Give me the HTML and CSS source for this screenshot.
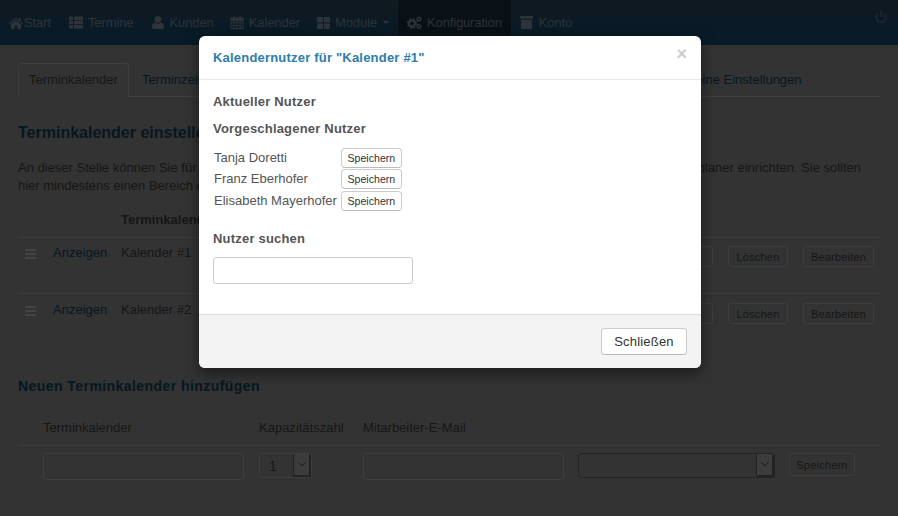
FILE: index.html
```html
<!DOCTYPE html>
<html lang="de">
<head>
<meta charset="utf-8">
<title>Konfiguration</title>
<link rel="stylesheet" href="styles.css">
</head>
<body>
<nav class="topbar">
  <a class="nav-item"><svg class="ico ico-home" viewBox="0 0 14 12"><path d="M7 0.5 L0 6.6 L0.8 7.5 L7 2.2 L13.2 7.5 L14 6.6 L11.5 4.4 V1 H9.8 V2.9 Z M7 3.4 L2 7.6 V12 H5.6 V8.4 H8.4 V12 H12 V7.6 Z"/></svg>Start</a>
  <a class="nav-item"><svg class="ico ico-w" viewBox="0 0 14 12"><path d="M0 0H4V3.4H0ZM5 0H14V3.4H5ZM0 4.3H4V7.7H0ZM5 4.3H14V7.7H5ZM0 8.6H4V12H0ZM5 8.6H14V12H5Z"/></svg>Termine</a>
  <a class="nav-item"><svg class="ico ico-u" viewBox="1 0 12 13"><path d="M7 0A3.3 3.3 0 0 1 7 6.8A3.3 3.3 0 0 1 7 0ZM4 6.6C5.6 8 8.4 8 10 6.6C12.2 7 13 8.6 13 11.2C13 12.4 12.2 13 11 13H3C1.8 13 1 12.4 1 11.2C1 8.6 1.8 7 4 6.6Z"/></svg>Kunden</a>
  <a class="nav-item nav-tight"><svg class="ico ico-w ico-cal" viewBox="0 0 14 14"><path fill-rule="evenodd" d="M3 0H4.5V1.5H9.5V0H11V1.5H14V14H0V1.5H3ZM1 5V6.8H3V5ZM4 5V6.8H6.5V5ZM7.5 5V6.8H10V5ZM11 5V6.8H13V5ZM1 7.8V9.6H3V7.8ZM4 7.8V9.6H6.5V7.8ZM7.5 7.8V9.6H10V7.8ZM11 7.8V9.6H13V7.8ZM1 10.6V13H3V10.6ZM4 10.6V13H6.5V10.6ZM7.5 10.6V13H10V10.6ZM11 10.6V13H13V10.6Z"/></svg>Kalender</a>
  <a class="nav-item nav-tight-s"><svg class="ico ico-m" viewBox="0 0 13 12"><path d="M0 0H6V5.5H0ZM7 0H13V5.5H7ZM0 6.5H6V12H0ZM7 6.5H13V12H7Z"/></svg>Module<span class="caret"></span></a>
  <a class="nav-item active"><svg class="ico ico-g" viewBox="0 0 15 13"><circle class="gear-ring" cx="5" cy="7.5" r="3"/><circle class="gear-teeth" cx="5" cy="7.5" r="4.6"/><circle class="gear-ring thin" cx="12" cy="3" r="1.7"/><circle class="gear-ring thin" cx="12" cy="10.4" r="1.7"/></svg>Konfiguration</a>
  <a class="nav-item"><svg class="ico ico-k" viewBox="0 0 13 13"><path d="M0 0H13V2.8H0ZM1 3.8H12V13H1Z"/></svg>Konto</a>
  <span class="nav-spacer"></span>
  <svg class="power" viewBox="0 0 12 13"><path d="M6 0.5V6" /><path d="M3.3 2.6A4.8 4.8 0 1 0 8.7 2.6"/></svg>
</nav>

<main class="page">
  <ul class="tabs">
    <li class="tab current">Terminkalender</li>
    <li class="tab">Terminzeiten</li>
    <li class="tab tab-last">Allgemeine Einstellungen</li>
  </ul>

  <h2 class="section-title">Terminkalender einstellen</h2>
  <p class="intro">An dieser Stelle können Sie für jeden Mitarbeiter oder Bereich einen einzelnen Terminkalender für Ihren Online-Terminplaner einrichten. Sie sollten hier mindestens einen Bereich einrichten, damit Kunden Termine buchen können.</p>

  <div class="cal-head">Terminkalender</div>
  <div class="cal-row">
    <span class="handle"><i></i><i></i><i></i></span>
    <a class="link">Anzeigen</a>
    <span class="cal-name">Kalender #1</span>
    <span class="cal-actions">
      <button class="btn-dark btn-user"><svg class="mini-user" viewBox="0 0 8 8"><path d="M4 0A1.8 1.8 0 0 1 4 3.8A1.8 1.8 0 0 1 4 0ZM0.5 8C0.5 5 2 4.2 4 4.2C6 4.2 7.5 5 7.5 8Z"/></svg></button>
      <button class="btn-dark btn-del">Löschen</button>
      <button class="btn-dark btn-edit">Bearbeiten</button>
    </span>
  </div>
  <div class="cal-row">
    <span class="handle"><i></i><i></i><i></i></span>
    <a class="link">Anzeigen</a>
    <span class="cal-name">Kalender #2</span>
    <span class="cal-actions">
      <button class="btn-dark btn-user"><svg class="mini-user" viewBox="0 0 8 8"><path d="M4 0A1.8 1.8 0 0 1 4 3.8A1.8 1.8 0 0 1 4 0ZM0.5 8C0.5 5 2 4.2 4 4.2C6 4.2 7.5 5 7.5 8Z"/></svg></button>
      <button class="btn-dark btn-del">Löschen</button>
      <button class="btn-dark btn-edit">Bearbeiten</button>
    </span>
  </div>

  <h2 class="section-title add-title">Neuen Terminkalender hinzufügen</h2>
  <div class="add-head">
    <span class="col-name">Terminkalender</span>
    <span class="col-cap">Kapazitätszahl</span>
    <span class="col-mail">Mitarbeiter-E-Mail</span>
  </div>
  <div class="add-row">
    <span class="field col-name"></span>
    <span class="select col-cap"><span class="select-val">1</span><span class="select-arrow"><svg viewBox="0 0 8 5"><path d="M0.5 0.5L4 4L7.5 0.5"/></svg></span></span>
    <span class="field col-mail"></span>
    <span class="select select-strong col-user"><span class="select-val"></span><span class="select-arrow"><svg viewBox="0 0 8 5"><path d="M0.5 0.5L4 4L7.5 0.5"/></svg></span></span>
    <button class="btn-dark btn-save">Speichern</button>
  </div>
</main>

<section class="modal" role="dialog">
  <header class="modal-head">
    <h4 class="modal-title">Kalendernutzer für "Kalender #1"</h4>
    <span class="close">×</span>
  </header>
  <div class="modal-body">
    <h5 class="sub sub-current">Aktueller Nutzer</h5>
    <h5 class="sub sub-proposed">Vorgeschlagener Nutzer</h5>
    <table class="users">
      <tr><td>Tanja Doretti</td><td><button class="btn-mini">Speichern</button></td></tr>
      <tr><td>Franz Eberhofer</td><td><button class="btn-mini">Speichern</button></td></tr>
      <tr><td>Elisabeth Mayerhofer</td><td><button class="btn-mini">Speichern</button></td></tr>
    </table>
    <h5 class="sub sub-search">Nutzer suchen</h5>
    <input class="search" type="text">
  </div>
  <footer class="modal-foot"><button class="btn-close">Schließen</button></footer>
</section>
</body>
</html>
```
FILE: styles.css
```css
* { box-sizing: border-box; }
html, body { margin: 0; height: 516px; overflow: hidden; }
body {
  background: #333333;
  color: #161616;
  font-family: "Liberation Sans", Arial, sans-serif;
  font-size: 13px;
  position: relative;
}
button { font-family: inherit; }

/* top bar */
.topbar {
  display: flex;
  align-items: stretch;
  height: 45px;
  background: linear-gradient(#0f1a21, #071b29);
}
.nav-item {
  display: flex;
  align-items: center;
  padding: 0 9px;
  color: #2d3338;
  font-size: 13px;
  letter-spacing: -.1px;
}
.nav-tight { margin-left: -2px; }
.nav-tight-s { margin-left: -1px; }
.nav-item.active { background: #091116; letter-spacing: -.15px; }
.ico { fill: #2d3338; flex: none; }
.ico-home { width: 14px; height: 12px; margin-right: 1px; }
.ico-w { width: 14px; height: 13px; margin-right: 5px; }
.ico-u { width: 12px; height: 13px; margin-right: 6px; }
.ico-m { width: 13px; height: 12px; margin-right: 5px; }
.ico-g { width: 15px; height: 13px; margin-right: 5px; }
.ico-k { width: 13px; height: 13px; margin-right: 6px; }
.gear-ring { fill: none; stroke: #2d3338; stroke-width: 2.4; }
.gear-ring.thin { stroke-width: 1.6; }
.gear-teeth { fill: none; stroke: #2d3338; stroke-width: 1.6; stroke-dasharray: 2 1.6; }
.caret {
  width: 0;
  height: 0;
  margin-left: 6px;
  border-left: 3px solid transparent;
  border-right: 3px solid transparent;
  border-top: 3px solid #2d3338;
}
.nav-spacer { flex: 1; }
.power {
  width: 12px;
  height: 13px;
  margin: 11px 11px 0 0;
  fill: none;
  stroke: #1a262e;
  stroke-width: 2;
}

/* page */
.page { padding: 18px 18px 0; width: 898px; }
.tabs {
  display: flex;
  list-style: none;
  margin: 0;
  padding: 0;
  height: 34px;
  border-bottom: 1px solid #3e3e3e;
}
.tab {
  padding: 0 10px;
  height: 34px;
  line-height: 32px;
  color: #061722;
  border: 1px solid transparent;
}
.tab.current {
  margin-right: 2px;
  color: #161616;
  background: #333333;
  border-color: #3e3e3e #3e3e3e #333333;
  border-radius: 4px 4px 0 0;
}
.tab-last { margin-left: 418px; }

.section-title {
  margin: 0;
  font-size: 16px;
  line-height: 18px;
  font-weight: bold;
  color: #061722;
}
.tabs + .section-title { margin-top: 27px; }
.intro { margin: 17px 0 0; line-height: 18px; width: 848px; color: #161616; }

.cal-head {
  margin-top: 8px;
  height: 35px;
  padding: 8px 0 0 103px;
  line-height: 18px;
  font-weight: bold;
  border-bottom: 1px solid #3e3e3e;
}
.cal-row {
  display: flex;
  height: 56px;
  padding-top: 6px;
  border-bottom: 1px solid #3e3e3e;
  line-height: 18px;
}
.cal-row + .cal-row { padding-top: 7px; border-bottom: 0; }
.handle {
  display: flex;
  flex-direction: column;
  gap: 2px;
  width: 11px;
  margin: 5px 0 0 7px;
}
.handle i { display: block; height: 2px; background: #444444; }
.link { margin-left: 17px; width: 68px; color: #061722; }
.cal-name { flex: 1; }
.cal-actions { display: flex; margin: 2px 0 0 0; }
.btn-dark {
  height: 21px;
  padding: 0;
  font-size: 11px;
  letter-spacing: .2px;
  color: #161616;
  background: #333333;
  border: 1px solid #3d3d3d;
  border-radius: 3px;
}
.btn-user { width: 40px; padding-left: 19px; }
.mini-user { display: block; width: 8px; height: 8px; fill: #161616; }
.btn-del { width: 60px; margin-left: 15px; }
.btn-edit { width: 71px; margin: 0 6px 0 15px; }

.add-title { margin-top: 27px; font-size: 14px; letter-spacing: .44px; }
.add-head {
  display: flex;
  height: 36px;
  margin-top: 15px;
  padding: 9px 0 0 25px;
  line-height: 18px;
  border-bottom: 1px solid #3e3e3e;
}
.add-row { display: flex; padding: 7px 0 0 25px; }
.col-name { width: 201px; margin-right: 15px; }
.col-cap { width: 53px; margin-right: 51px; flex: none; white-space: nowrap; }
.col-mail { width: 201px; margin-right: 14px; }
.col-user { width: 197px; margin-right: 14px; }
.field {
  height: 27px;
  border: 1px solid #3e3e3e;
  border-radius: 3px;
}
.select {
  display: flex;
  height: 25px;
  border: 1px solid #3e3e3e;
  border-radius: 3px;
}
.select-strong { border-color: #242424; }
.select-val { flex: 1; padding: 3px 0 0 9px; line-height: 18px; font-size: 14px; }
.select-arrow {
  display: flex;
  align-items: center;
  justify-content: center;
  width: 18px;
  background: #3c3c3c;
  border: 1px solid #222222;
  border-width: 0 2px 2px 1px;
  border-radius: 0 2px 2px 0;
}
.select-arrow svg { width: 8px; height: 5px; fill: none; stroke: #161616; stroke-width: 1; }
.btn-save { width: 66px; height: 23px; }

/* modal */
.modal {
  position: absolute;
  left: 199px;
  top: 36px;
  width: 502px;
  height: 332px;
  display: flex;
  flex-direction: column;
  background: #ffffff;
  border-radius: 6px;
  box-shadow: 0 5px 15px rgba(0, 0, 0, .5);
  color: #555555;
}
.modal-head {
  display: flex;
  justify-content: space-between;
  height: 44px;
  padding: 13px 14px 0;
  border-bottom: 1px solid #e9e9e9;
}
.modal-title {
  margin: 0;
  font-size: 13px;
  letter-spacing: .2px;
  line-height: 18px;
  font-weight: bold;
  color: #2e7dab;
}
.close {
  font-size: 18px;
  line-height: 10px;
  font-weight: bold;
  color: #cccccc;
}
.modal-body { flex: 1; padding: 0 14px; }
.sub {
  margin: 0;
  font-size: 13px;
  letter-spacing: .2px;
  line-height: 16px;
  font-weight: bold;
  color: #555555;
}
.sub-current { margin-top: 14px; }
.sub-proposed { margin-top: 11px; }
.sub-search { margin-top: 19px; }
.users { border-collapse: collapse; margin-top: 10px; }
.users td { padding: 0 0 0 1px; height: 21.5px; line-height: 16px; }
.users td + td { padding-left: 4px; }
.btn-mini {
  display: block;
  width: 61px;
  height: 20px;
  padding: 0;
  font-size: 10.6px;
  color: #333333;
  background: #ffffff;
  border: 1px solid #cccccc;
  border-bottom-color: #bbbbbb;
  border-radius: 4px;
}
.search {
  display: block;
  width: 200px;
  height: 27px;
  margin-top: 10px;
  border: 1px solid #cccccc;
  border-radius: 3px;
  background: #ffffff;
}
.modal-foot {
  display: flex;
  justify-content: flex-end;
  height: 54px;
  padding: 13px 14px 0;
  background: #f3f3f3;
  border-top: 1px solid #dddddd;
  border-radius: 0 0 6px 6px;
}
.btn-close {
  width: 86px;
  height: 27px;
  padding: 0;
  font-size: 13px;
  letter-spacing: .2px;
  color: #333333;
  background: #ffffff;
  border: 1px solid #cccccc;
  border-bottom-color: #bbbbbb;
  border-radius: 3px;
}
```
